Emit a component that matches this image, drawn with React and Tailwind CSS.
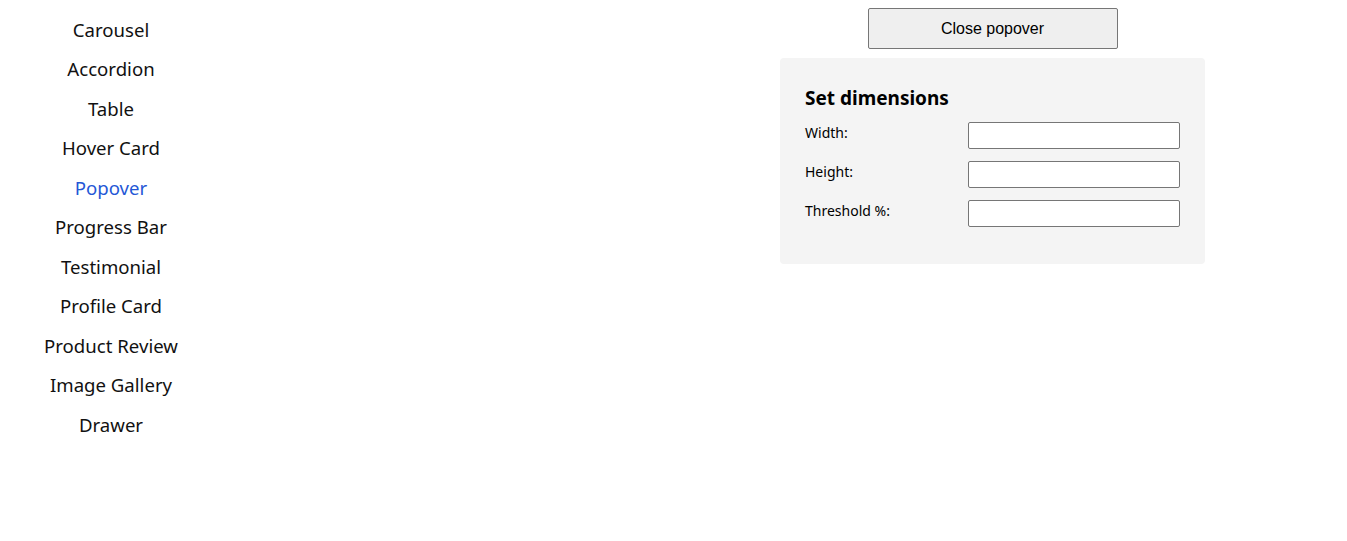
import React from 'react';

const items = [
  'Carousel',
  'Accordion',
  'Table',
  'Hover Card',
  'Popover',
  'Progress Bar',
  'Testimonial',
  'Profile Card',
  'Product Review',
  'Image Gallery',
  'Drawer',
];

export default function App() {
  return (
    <div className="flex min-h-screen w-full bg-white text-black" style={{ fontFamily: '"Noto Sans", "Open Sans", sans-serif' }}>
      <nav className="w-[222px] shrink-0 pt-[10px]">
        <ul className="flex flex-col">
          {items.map((name) => (
            <li
              key={name}
              className={`h-[39.5px] flex items-center justify-center text-[18.6px] ${
                name === 'Popover' ? 'text-[#2457d6]' : 'text-[#111]'
              }`}
            >
              {name}
            </li>
          ))}
        </ul>
      </nav>

      <main className="flex-1 pl-[416px] pt-[8px]">
        <div className="flex flex-col items-center">
          <button
            className="h-[41px] w-[250px] rounded-[2px] border border-[#767676] bg-[#efefef] text-[16px] text-black"
            style={{ fontFamily: '"Liberation Sans", Arial, sans-serif' }}
          >
            Close popover
          </button>

          <div className="mt-[9px] w-[425px] rounded-[4px] bg-[#f4f4f4] px-[25px] pt-[26px] pb-[37px]">
            <h2 className="text-[19px] font-bold leading-[28px]">Set dimensions</h2>
            <div className="mt-[10px] grid grid-cols-[163px_212px] gap-y-[12px] text-[14px]">
              <label className="pt-[1px] leading-[20px]">Width:</label>
              <input className="h-[27px] rounded-[2px] border border-[#767676] bg-white" />
              <label className="pt-[1px] leading-[20px]">Height:</label>
              <input className="h-[27px] rounded-[2px] border border-[#767676] bg-white" />
              <label className="pt-[1px] leading-[20px]">Threshold %:</label>
              <input className="h-[27px] rounded-[2px] border border-[#767676] bg-white" />
            </div>
          </div>
        </div>
      </main>
    </div>
  );
}
